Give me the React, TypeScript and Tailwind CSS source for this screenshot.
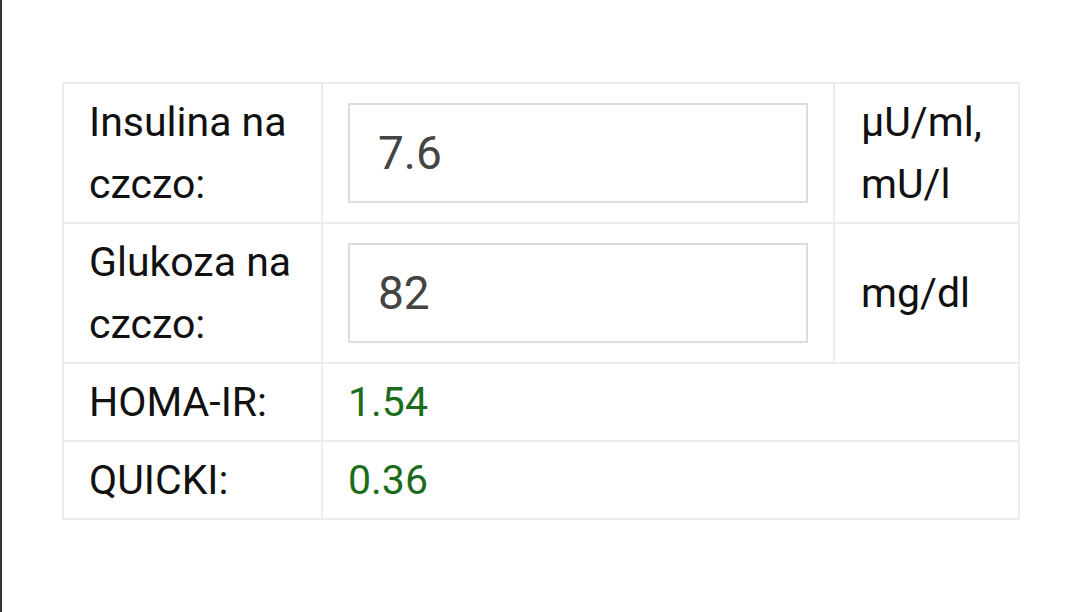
import React from "react";

export default function App() {
  const font = { fontFamily: "Roboto, 'Noto Sans', Arial, sans-serif" };
  return (
    <div
      className="w-[1080px] h-[612px] bg-white border-l-2 border-[#333333] pt-[82px] pl-[60px]"
      style={font}
    >
      <div className="w-[958px] grid grid-cols-[257px_510px_183px] gap-[2px] p-[2px] bg-[#ececec] text-[41px] leading-[62px] text-[#111111]">
        <div className="bg-white px-[25px] py-[7px] flex items-center">
          <span>
            Insulina na
            <br />
            czczo:
          </span>
        </div>
        <div className="bg-white px-[25px] flex items-center">
          <input
            readOnly
            value="7.6"
            className="w-full h-[100px] border-2 border-[#dddddd] pl-[28px] text-[46px] text-[#444444] outline-none bg-white"
            style={font}
          />
        </div>
        <div className="bg-white px-[26px] py-[7px] flex items-center">
          <span>
            μU/ml,
            <br />
            mU/l
          </span>
        </div>

        <div className="bg-white px-[25px] py-[7px] flex items-center">
          <span>
            Glukoza na
            <br />
            czczo:
          </span>
        </div>
        <div className="bg-white px-[25px] flex items-center">
          <input
            readOnly
            value="82"
            className="w-full h-[100px] border-2 border-[#dddddd] pl-[28px] text-[46px] text-[#444444] outline-none bg-white"
            style={font}
          />
        </div>
        <div className="bg-white px-[26px] py-[7px] flex items-center">
          <span>mg/dl</span>
        </div>

        <div className="bg-white px-[25px] py-[7px] flex items-center">
          <span>HOMA-IR:</span>
        </div>
        <div className="bg-white px-[25px] py-[7px] col-span-2 flex items-center text-[#1b6d1b]">
          <span>1.54</span>
        </div>

        <div className="bg-white px-[25px] py-[7px] flex items-center">
          <span>QUICKI:</span>
        </div>
        <div className="bg-white px-[25px] py-[7px] col-span-2 flex items-center text-[#1b6d1b]">
          <span>0.36</span>
        </div>
      </div>
    </div>
  );
}
